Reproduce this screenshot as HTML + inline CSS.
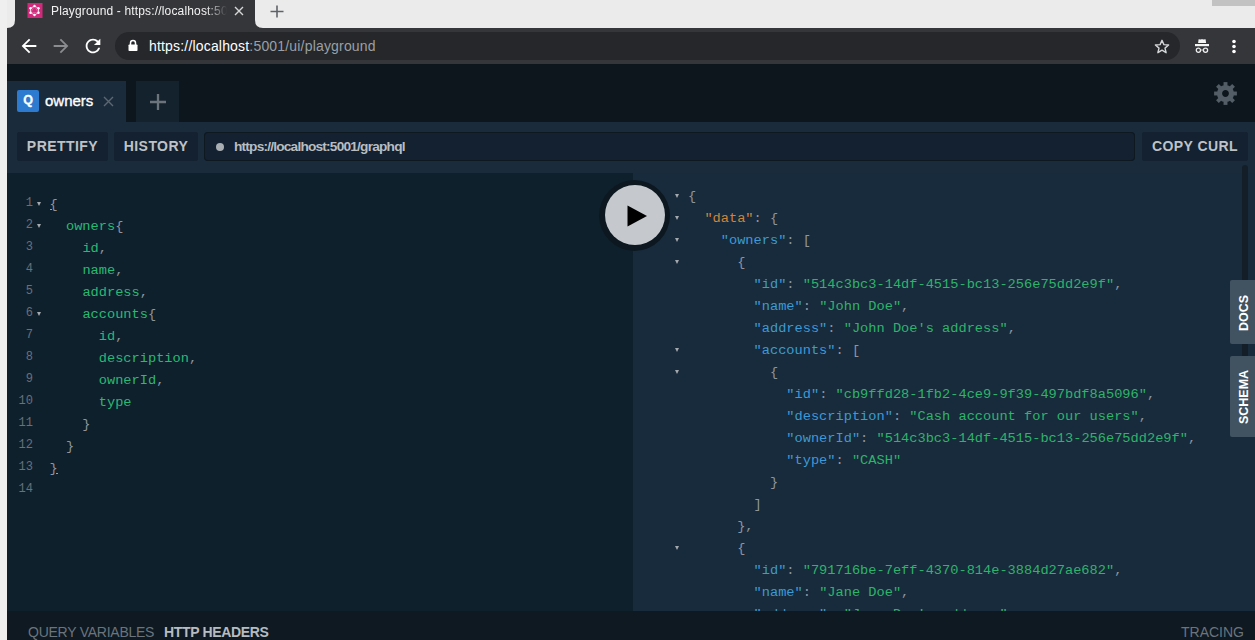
<!DOCTYPE html>
<html><head><meta charset="utf-8">
<style>
*{margin:0;padding:0;box-sizing:border-box}
html,body{width:1255px;height:640px;overflow:hidden;background:#ececec;font-family:"Liberation Sans",sans-serif}
.abs{position:absolute}
#leftstrip{left:0;top:0;width:7px;height:640px;background:#efefef}
#tabstrip{left:7px;top:0;width:1248px;height:28px;background:#ebebeb}
#wctl{left:1212px;top:0;width:43px;height:6px;background:#c2c2c2}
#ctab{left:15px;top:0;width:240px;height:27px;background:#35363a}
#toolbar{left:7px;top:28px;width:1248px;height:36px;background:#35363a}
#omni{left:115px;top:32px;width:1065px;height:28px;background:#25272b;border-radius:14px}
#pg{left:7px;top:64px;width:1248px;height:576px;background:#0d161d}
#ptab{left:7px;top:81px;width:119px;height:41px;background:#1a2c3c}
#ntab{left:136px;top:81px;width:43px;height:41px;background:#14222e}
#trow{left:7px;top:122px;width:1248px;height:51px;background:#1a2c3c}
.btn{position:absolute;top:132px;height:29px;background:#132130;border-radius:2px;color:#bec2c6;font-weight:bold;font-size:14px;line-height:29px;text-align:center;letter-spacing:0.45px}
#editor{left:7px;top:173px;width:626px;height:438px;background:#0f202d}
#result{left:633px;top:173px;width:622px;height:438px;background:#182b3c;overflow:hidden}
#bottom{left:7px;top:611px;width:1248px;height:29px;background:#0e1922}
.code{position:absolute;font-family:"Liberation Mono",monospace;font-size:13.67px;line-height:22px;white-space:pre;color:#8e959c}
.ln{position:absolute;font-family:"Liberation Mono",monospace;font-size:12px;line-height:22px;color:#687078;text-align:right;width:30px;white-space:pre}
.p{color:#29b973}
.k{color:#3c9ad6}
.s{color:#2fb36b}
.o{color:#d0853b}
.tri{position:absolute;width:0;height:0;border-left:2.7px solid transparent;border-right:2.7px solid transparent;border-top:4px solid #a4a9ae}
</style></head><body>
<div id="leftstrip" class="abs"></div>
<div id="tabstrip" class="abs"></div>
<div id="wctl" class="abs"></div>
<!-- chrome tab -->
<svg class="abs" style="left:0;top:0" width="300" height="28">
  <path d="M7 28 Q15 28 15 20 L15 0 L255 0 L255 20 Q255 28 263 28 Z" fill="#35363a"/>
</svg>
<svg class="abs" style="left:27px;top:3px" width="16" height="16" viewBox="0 0 16 16">
  <rect x="0.5" y="0" width="15" height="15" fill="#d12a7d"/>
  <g stroke="#f4d0e2" stroke-width="0.9" fill="none">
    <polygon points="7.5,3 11.5,5.3 11.5,9.7 7.5,12 3.5,9.7 3.5,5.3"/>
    <polygon points="7.5,3 11.5,9.7 3.5,9.7" stroke-width="0.5" stroke="#e690bb"/>
  </g>
  <g fill="#fff"><circle cx="7.5" cy="3" r="1.2"/><circle cx="11.5" cy="5.3" r="1.2"/><circle cx="11.5" cy="9.7" r="1.2"/><circle cx="7.5" cy="12" r="1.2"/><circle cx="3.5" cy="9.7" r="1.2"/><circle cx="3.5" cy="5.3" r="1.2"/></g>
</svg>
<div class="abs" style="left:51px;top:4px;font-size:12px;line-height:14px;color:#f2f2f2;white-space:nowrap;width:176px;overflow:hidden;letter-spacing:0.16px;-webkit-mask-image:linear-gradient(90deg,#000 155px,transparent 176px)">Playground - https://localhost:5001/ui/playground</div>
<svg class="abs" style="left:234px;top:6px" width="10" height="10" viewBox="0 0 10 10"><path d="M1 1L9 9M9 1L1 9" stroke="#d6d7d8" stroke-width="1.4"/></svg>
<svg class="abs" style="left:270px;top:5px" width="14" height="13" viewBox="0 0 14 13"><path d="M7 0.5V12.5M0.5 6.5H13.5" stroke="#5f6368" stroke-width="1.6"/></svg>
<div id="toolbar" class="abs"></div>
<!-- nav icons -->
<svg class="abs" style="left:17.7px;top:35.2px" width="22" height="22" viewBox="0 0 24 24"><path fill="#fff" d="M20 11H7.83l5.59-5.59L12 4l-8 8 8 8 1.41-1.41L7.83 13H20v-2z"/></svg>
<svg class="abs" style="left:49.9px;top:35.2px" width="22" height="22" viewBox="0 0 24 24"><path fill="#8a8c8f" d="M12 4l-1.41 1.41L16.17 11H4v2h12.17l-5.58 5.59L12 20l8-8z"/></svg>
<svg class="abs" style="left:81.8px;top:35.2px" width="22" height="22" viewBox="0 0 24 24"><path fill="#fff" d="M17.65 6.35C16.2 4.9 14.21 4 12 4c-4.42 0-7.99 3.58-7.99 8s3.57 8 7.99 8c3.73 0 6.84-2.55 7.73-6h-2.08c-.82 2.33-3.04 4-5.65 4-3.31 0-6-2.69-6-6s2.69-6 6-6c1.66 0 3.14.69 4.22 1.78L13 11h7V4l-2.35 2.35z"/></svg>
<div id="omni" class="abs"></div>
<svg class="abs" style="left:128px;top:39px" width="10" height="13" viewBox="0 0 10 13"><path d="M2.5 6V4A2.5 2.5 0 0 1 7.5 4V6" stroke="#fff" stroke-width="1.5" fill="none"/><rect x="0.5" y="5.5" width="9" height="6.5" rx="0.8" fill="#fff"/></svg>
<div class="abs" style="left:149px;top:38px;font-size:14px;line-height:16px;color:#fff;white-space:nowrap;letter-spacing:0.18px">https://localhost<span style="color:#9aa0a6">:5001/ui/playground</span></div>
<svg class="abs" style="left:1154px;top:38.5px" width="16" height="16" viewBox="0 0 16 16"><path d="M8 1.3L9.9 5.6L14.6 6L11 9.1L12.1 13.7L8 11.2L3.9 13.7L5 9.1L1.4 6L6.1 5.6Z" stroke="#d4d6d8" stroke-width="1.4" fill="none" stroke-linejoin="round"/></svg>
<svg class="abs" style="left:1194px;top:38px" width="16" height="16" viewBox="0 0 16 16"><path d="M4.6 1.2L7 1.6L8 1.1L9 1.6L11.6 1.2L12.1 5H4.1Z" fill="#f4f4f4"/><rect x="1" y="6" width="14" height="2.2" fill="#f4f4f4"/><circle cx="4.4" cy="12.2" r="2.1" stroke="#eee" stroke-width="1.3" fill="none"/><circle cx="11.5" cy="12.2" r="2.1" stroke="#eee" stroke-width="1.3" fill="none"/><path d="M6.5 12H9.4" stroke="#ddd" stroke-width="0.9"/></svg>
<svg class="abs" style="left:1231px;top:39px" width="6" height="15" viewBox="0 0 6 15"><circle cx="3" cy="2.5" r="1.8" fill="#fff"/><circle cx="3" cy="7.5" r="1.8" fill="#fff"/><circle cx="3" cy="12.5" r="1.8" fill="#fff"/></svg>

<div id="pg" class="abs"></div>
<div id="ptab" class="abs"></div>
<div class="abs" style="left:17px;top:90px;width:22px;height:22px;background:#2d7bd0;border-radius:2px;color:#fff;font-weight:bold;font-size:12.5px;line-height:20px;text-align:center;-webkit-text-stroke:0.3px #fff">Q</div>
<div class="abs" style="left:45px;top:91.5px;font-size:15px;line-height:18px;color:#fff;-webkit-text-stroke:0.35px #fff">owners</div>
<svg class="abs" style="left:103px;top:96px" width="11" height="11" viewBox="0 0 11 11"><path d="M1 1L10 10M10 1L1 10" stroke="#5d6770" stroke-width="1.4"/></svg>
<div id="ntab" class="abs"></div>
<svg class="abs" style="left:149px;top:93px" width="18" height="18" viewBox="0 0 18 18"><path d="M9 1V17M1 9H17" stroke="#6b747b" stroke-width="2.3"/></svg>
<svg class="abs" style="left:1213px;top:81px" width="25" height="25" viewBox="-12.5 -12.5 25 25"><g fill="#535d66"><rect x="-1.95" y="-11.4" width="3.9" height="5" transform="rotate(0)"/><rect x="-1.95" y="-11.4" width="3.9" height="5" transform="rotate(45)"/><rect x="-1.95" y="-11.4" width="3.9" height="5" transform="rotate(90)"/><rect x="-1.95" y="-11.4" width="3.9" height="5" transform="rotate(135)"/><rect x="-1.95" y="-11.4" width="3.9" height="5" transform="rotate(180)"/><rect x="-1.95" y="-11.4" width="3.9" height="5" transform="rotate(225)"/><rect x="-1.95" y="-11.4" width="3.9" height="5" transform="rotate(270)"/><rect x="-1.95" y="-11.4" width="3.9" height="5" transform="rotate(315)"/></g><circle r="6" fill="none" stroke="#535d66" stroke-width="5.2"/></svg>
<div id="trow" class="abs"></div>
<div class="btn" style="left:17px;width:91px">PRETTIFY</div>
<div class="btn" style="left:114px;width:84px">HISTORY</div>
<div class="btn" style="left:204px;width:931px;border-radius:4px;box-shadow:inset 0 0 0 1px #0e1820"></div>
<div class="abs" style="left:216px;top:143px;width:8px;height:8px;border-radius:50%;background:#a9aeb3"></div>
<div class="abs" style="left:234px;top:137.5px;font-size:13.7px;line-height:18px;color:#b8bdc2;font-weight:bold;letter-spacing:-0.8px">https://localhost:5001/graphql</div>
<div class="btn" style="left:1142px;width:106px">COPY CURL</div>

<div id="editor" class="abs"></div>
<div class="ln" style="left:3px;top:192px">1
2
3
4
5
6
7
8
9
10
11
12
13
14</div>
<div class="tri" style="left:37px;top:202px"></div>
<div class="tri" style="left:37px;top:224px"></div>
<div class="tri" style="left:37px;top:312px"></div>
<div class="code" style="left:49.6px;top:193.5px">{
  <span class="p">owners</span>{
    <span class="p">id</span>,
    <span class="p">name</span>,
    <span class="p">address</span>,
    <span class="p">accounts</span>{
      <span class="p">id</span>,
      <span class="p">description</span>,
      <span class="p">ownerId</span>,
      <span class="p">type</span>
    }
  }
}</div>

<div class="abs" style="left:50px;top:209px;width:2px;height:1px;background:#9aa0a5"></div>
<div class="abs" style="left:56px;top:473px;width:2px;height:1px;background:#9aa0a5"></div>
<div id="result" class="abs"></div>
<div class="tri" style="left:675px;top:194px"></div>
<div class="tri" style="left:675px;top:216px"></div>
<div class="tri" style="left:675px;top:238px"></div>
<div class="tri" style="left:675px;top:260px"></div>
<div class="tri" style="left:675px;top:348px"></div>
<div class="tri" style="left:675px;top:370px"></div>
<div class="tri" style="left:675px;top:546px"></div>
<div class="code" style="left:688px;top:185.5px;height:425.5px;overflow:hidden">{
  <span class="o">"data"</span>: {
    <span class="k">"owners"</span>: [
      {
        <span class="k">"id"</span>: <span class="s">"514c3bc3-14df-4515-bc13-256e75dd2e9f"</span>,
        <span class="k">"name"</span>: <span class="s">"John Doe"</span>,
        <span class="k">"address"</span>: <span class="s">"John Doe's address"</span>,
        <span class="k">"accounts"</span>: [
          {
            <span class="k">"id"</span>: <span class="s">"cb9ffd28-1fb2-4ce9-9f39-497bdf8a5096"</span>,
            <span class="k">"description"</span>: <span class="s">"Cash account for our users"</span>,
            <span class="k">"ownerId"</span>: <span class="s">"514c3bc3-14df-4515-bc13-256e75dd2e9f"</span>,
            <span class="k">"type"</span>: <span class="s">"CASH"</span>
          }
        ]
      },
      {
        <span class="k">"id"</span>: <span class="s">"791716be-7eff-4370-814e-3884d27ae682"</span>,
        <span class="k">"name"</span>: <span class="s">"Jane Doe"</span>,
        <span class="k">"address"</span>: <span class="s">"Jane Doe's address"</span>,
</div>
<!-- play button -->
<div class="abs" style="left:599px;top:180px;width:71px;height:71px;border-radius:50%;background:#0c1720"></div>
<div class="abs" style="left:605px;top:185px;width:60px;height:60px;border-radius:50%;background:#c5c9cd"></div>
<svg class="abs" style="left:627px;top:205px" width="21" height="22" viewBox="0 0 21 22"><path d="M0.5 0.5L20 11L0.5 21.5Z" fill="#000"/></svg>
<!-- side tabs -->
<div class="abs" style="left:1242px;top:165px;width:6px;height:265px;background:#131e28;border-radius:3px"></div>
<div class="abs" style="left:1230px;top:280px;width:25px;height:64px;background:#415361;border-radius:2px 0 0 2px"></div>
<div class="abs" style="left:1230px;top:356px;width:25px;height:81px;background:#415361;border-radius:2px 0 0 2px"></div>
<div class="abs" style="left:1243.5px;top:312.5px;transform:translate(-50%,-50%) rotate(-90deg);font-size:12.5px;font-weight:bold;color:#fff;white-space:nowrap">DOCS</div>
<div class="abs" style="left:1243.5px;top:397px;transform:translate(-50%,-50%) rotate(-90deg);font-size:12.5px;font-weight:bold;color:#fff;white-space:nowrap">SCHEMA</div>

<div id="bottom" class="abs"></div>
<div class="abs" style="left:28px;top:623px;font-size:14px;line-height:18px;color:#6b747c;white-space:nowrap;letter-spacing:-0.25px">QUERY VARIABLES</div>
<div class="abs" style="left:164px;top:623px;font-size:14px;line-height:18px;color:#b6bcc1;font-weight:bold;white-space:nowrap;letter-spacing:-0.35px">HTTP HEADERS</div>
<div class="abs" style="left:1181px;top:623px;font-size:14px;line-height:18px;color:#6b747c;white-space:nowrap">TRACING</div>
</body></html>
